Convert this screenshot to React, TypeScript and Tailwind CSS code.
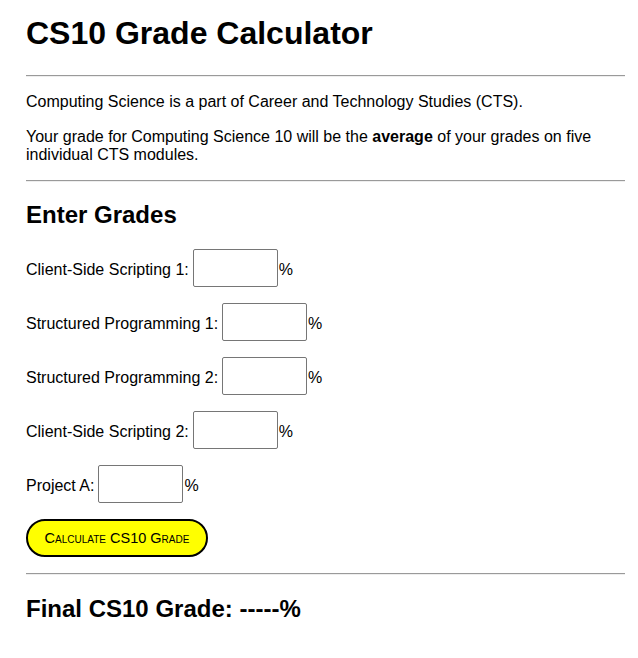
import { useState } from "react";

const modules = [
  "Client-Side Scripting 1",
  "Structured Programming 1",
  "Structured Programming 2",
  "Client-Side Scripting 2",
  "Project A",
];

function Rule() {
  return <hr className="border-0 border-t border-b border-t-[#9a9a9a] border-b-[#eeeeee]" />;
}

export default function App() {
  const [grades, setGrades] = useState<string[]>(["", "", "", "", ""]);
  const [result, setResult] = useState("-----");

  const calculate = () => {
    const nums = grades.map((g) => parseFloat(g));
    if (nums.some((n) => isNaN(n))) {
      setResult("-----");
      return;
    }
    const avg = nums.reduce((a, b) => a + b, 0) / nums.length;
    setResult(avg.toFixed(1));
  };

  return (
    <div className="min-h-[658px] bg-white text-black font-['Liberation_Sans',Arial,sans-serif]">
      <div className="ml-[26px] w-[599px] pt-[15px]">
        <h1 className="text-[32px] leading-[37px] font-bold">CS10 Grade Calculator</h1>

        <div className="mt-[23px]">
          <Rule />
        </div>

        <p className="mt-[16px] text-[16px] leading-[18px]">
          Computing Science is a part of Career and Technology Studies (CTS).
        </p>
        <p className="mt-[17px] text-[16px] leading-[17.5px]">
          Your grade for Computing Science 10 will be the <b>average</b> of your grades on five
          individual CTS modules.
        </p>

        <div className="mt-[17px]">
          <Rule />
        </div>

        <h2 className="mt-[19px] text-[24px] leading-[28px] font-bold">Enter Grades</h2>

        <div className="mt-[20px] flex flex-col gap-[16px]">
          {modules.map((name, i) => (
            <div key={name} className="flex items-center h-[38px] text-[16px]">
              <label htmlFor={"g" + i} className="mt-[4px] leading-[18px]">
                {name}:
              </label>
              <input
                id={"g" + i}
                type="text"
                value={grades[i]}
                onChange={(e) => {
                  const next = [...grades];
                  next[i] = e.target.value;
                  setGrades(next);
                }}
                className="ml-[4px] w-[85px] h-[38px] border border-[#767676] rounded-[2px] px-2 outline-none"
              />
              <span className="mt-[4px] ml-[1px] leading-[18px]">%</span>
            </div>
          ))}
        </div>

        <button
          type="button"
          onClick={calculate}
          className="mt-[16px] h-[38px] w-[182px] rounded-full border-2 border-black bg-[#ffff00] text-[14.5px] [font-variant:small-caps] leading-none text-black"
        >
          Calculate CS10 Grade
        </button>

        <div className="mt-[16px]">
          <Rule />
        </div>

        <h2 className="mt-[20px] text-[24px] leading-[28px] font-bold">
          Final CS10 Grade: {result}%
        </h2>
      </div>
    </div>
  );
}
